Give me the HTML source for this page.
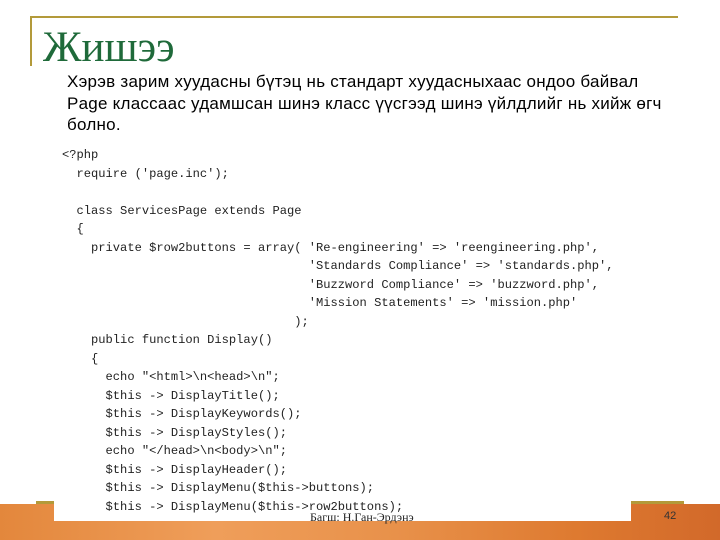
<!DOCTYPE html>
<html><head><meta charset="utf-8"><style>
html,body{margin:0;padding:0}
body{width:720px;height:540px;position:relative;overflow:hidden;background:#fff}
.band{position:absolute;left:0;top:504px;width:720px;height:36px;background:linear-gradient(90deg,#e3873c 0%,#ef9e5a 30%,#e8914a 55%,#de7a30 80%,#d2692a 100%)}
.gold{position:absolute;background:#b39a3a}
.title{position:absolute;left:43px;top:24px;font-family:"Liberation Serif",serif;font-size:43px;color:#1f6a3a;line-height:48px}
.body{position:absolute;left:67px;top:71px;font-family:"Liberation Sans",sans-serif;font-size:17px;letter-spacing:0.25px;line-height:21.5px;color:#000;width:640px;white-space:nowrap}
.code{position:absolute;left:54px;top:145px;width:577px;height:376px;background:#fff}
pre{position:absolute;left:8px;top:1px;margin:0;font-family:"Liberation Mono",monospace;font-size:12.1px;line-height:18.5px;color:#222}
.foot{position:absolute;top:510px;font-family:"Liberation Serif",serif;font-size:12px;color:#222}
.num{position:absolute;left:664px;top:510px;font-family:"Liberation Sans",sans-serif;font-size:11px;color:#333}
</style></head><body>
<div class="band"></div>
<div class="gold" style="left:30px;top:16px;width:648px;height:2px"></div>
<div class="gold" style="left:30px;top:16px;width:2px;height:50px"></div>
<div class="gold" style="left:36px;top:501px;width:648px;height:3px"></div>
<div class="title">Жишээ</div>
<div class="body">Хэрэв зарим хуудасны бүтэц нь стандарт хуудасныхаас ондоо байвал<br>Page классаас удамшсан шинэ класс үүсгээд шинэ үйлдлийг нь хийж өгч<br>болно.</div>
<div class="code"><pre>&lt;?php
  require ('page.inc');

  class ServicesPage extends Page
  {
    private $row2buttons = array( 'Re-engineering' => 'reengineering.php',
                                  'Standards Compliance' => 'standards.php',
                                  'Buzzword Compliance' => 'buzzword.php',
                                  'Mission Statements' => 'mission.php'
                                );
    public function Display()
    {
      echo "&lt;html&gt;\n&lt;head&gt;\n";
      $this -> DisplayTitle();
      $this -> DisplayKeywords();
      $this -> DisplayStyles();
      echo "&lt;/head&gt;\n&lt;body&gt;\n";
      $this -> DisplayHeader();
      $this -> DisplayMenu($this->buttons);
      $this -> DisplayMenu($this->row2buttons);</pre></div>
<div class="foot" style="left:310px">Багш: Н.Ган-Эрдэнэ</div>
<div class="num">42</div>
</body></html>
